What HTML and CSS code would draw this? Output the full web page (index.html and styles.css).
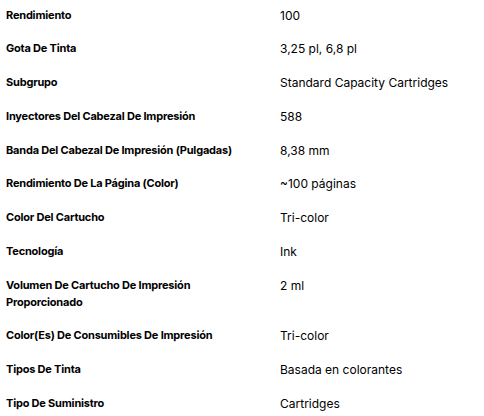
FILE: index.html
```html
<!DOCTYPE html>
<html lang="es">
<head>
<meta charset="utf-8">
<link rel="stylesheet" href="styles.css">
</head>
<body>
<dl class="specs">
  <div class="row"><dt class="label">Rendimiento</dt><dd class="value">100</dd></div>
  <div class="row"><dt class="label">Gota De Tinta</dt><dd class="value">3,25 pl, 6,8 pl</dd></div>
  <div class="row"><dt class="label">Subgrupo</dt><dd class="value">Standard Capacity Cartridges</dd></div>
  <div class="row"><dt class="label">Inyectores Del Cabezal De Impresión</dt><dd class="value">588</dd></div>
  <div class="row"><dt class="label">Banda Del Cabezal De Impresión (Pulgadas)</dt><dd class="value">8,38 mm</dd></div>
  <div class="row"><dt class="label">Rendimiento De La Página (Color)</dt><dd class="value">~100 páginas</dd></div>
  <div class="row"><dt class="label">Color Del Cartucho</dt><dd class="value">Tri-color</dd></div>
  <div class="row"><dt class="label">Tecnología</dt><dd class="value">Ink</dd></div>
  <div class="row"><dt class="label">Volumen De Cartucho De Impresión Proporcionado</dt><dd class="value">2 ml</dd></div>
  <div class="row"><dt class="label">Color(Es) De Consumibles De Impresión</dt><dd class="value">Tri-color</dd></div>
  <div class="row"><dt class="label">Tipos De Tinta</dt><dd class="value">Basada en colorantes</dd></div>
  <div class="row"><dt class="label">Tipo De Suministro</dt><dd class="value">Cartridges</dd></div>
</dl>
</body>
</html>
```
FILE: styles.css
```css
html, body {
  margin: 0;
  padding: 0;
  background: #fff;
}
body {
  font-family: Inter, "Liberation Sans", sans-serif;
  color: #000;
}
.specs {
  margin: -1.8px 0 0 0;
  padding: 0 0 0 6px;
}
.row {
  display: grid;
  grid-template-columns: 274px 1fr;
  padding: 8.38px 0;
}
.label {
  margin: 0;
  font-size: 11px;
  font-weight: 700;
  letter-spacing: -0.2px;
  line-height: 17px;
  padding-right: 20px;
}
.value {
  margin: 0;
  font-size: 12px;
  font-weight: 400;
  line-height: 17px;
}
```
